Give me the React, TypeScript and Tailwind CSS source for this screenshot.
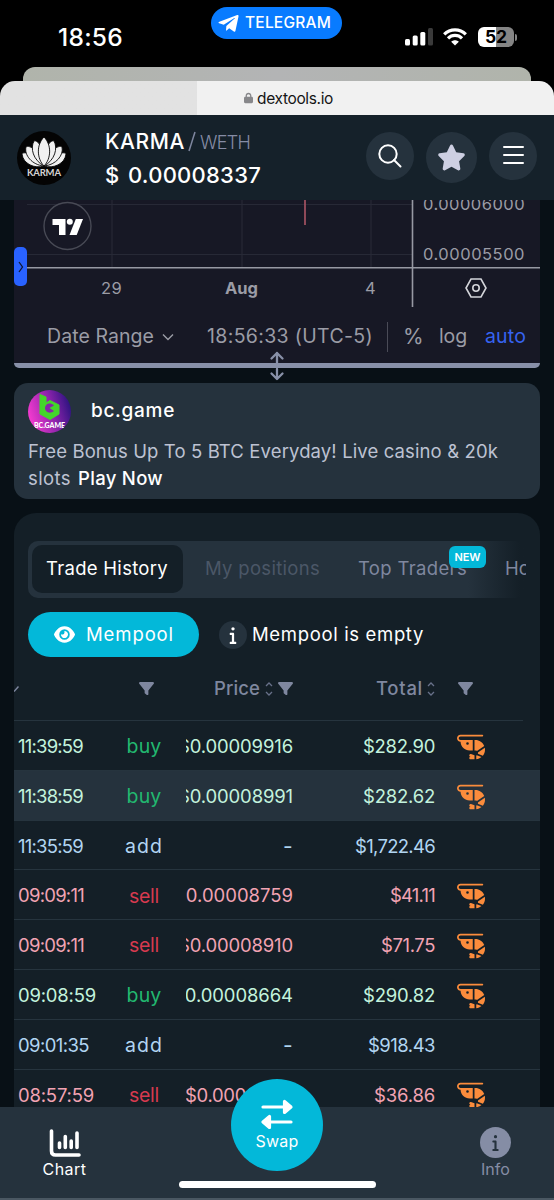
import { useLayoutEffect, useRef, useState } from "react";
import type { ReactNode } from "react";
import { FaEye, FaFilter, FaInfo, FaLock, FaShrimp, FaStar } from "react-icons/fa6";
import { FaTelegramPlane } from "react-icons/fa";

// Spreads a label over a fixed width by adjusting its letter spacing.
function Fit({ w, className = "", children }: { w: number; className?: string; children: string }) {
  const ref = useRef<HTMLSpanElement>(null);
  const [spacing, setSpacing] = useState(0);

  useLayoutEffect(() => {
    if (!ref.current) return;
    const natural = ref.current.getBoundingClientRect().width;
    setSpacing((s) => s + (w - natural) / children.length);
  }, [w, children]);

  return (
    <span
      ref={ref}
      style={{ letterSpacing: `${spacing}px` }}
      className={`inline-block shrink-0 whitespace-pre ${className}`}
    >
      {children}
    </span>
  );
}

type Kind = "buy" | "sell" | "add";
type Trade = {
  time: string;
  timeW: number;
  kind: Kind;
  price: string;
  priceW: number;
  total: string;
  totalW: number;
};

const trades: Trade[] = [
  { time: "11:39:59", timeW: 65, kind: "buy", price: "$0.00009916", priceW: 115, total: "$282.90", totalW: 72 },
  { time: "11:38:59", timeW: 65, kind: "buy", price: "$0.00008991", priceW: 115, total: "$282.62", totalW: 72 },
  { time: "11:35:59", timeW: 65, kind: "add", price: "-", priceW: 10, total: "$1,722.46", totalW: 80 },
  { time: "09:09:11", timeW: 66, kind: "sell", price: "$0.00008759", priceW: 119, total: "$41.11", totalW: 45 },
  { time: "09:09:11", timeW: 66, kind: "sell", price: "$0.00008910", priceW: 115, total: "$71.75", totalW: 54 },
  { time: "09:08:59", timeW: 78, kind: "buy", price: "$0.00008664", priceW: 120, total: "$290.82", totalW: 72 },
  { time: "09:01:35", timeW: 71, kind: "add", price: "-", priceW: 10, total: "$918.43", totalW: 67 },
  { time: "08:57:59", timeW: 76, kind: "sell", price: "$0.00008117", priceW: 108, total: "$36.86", totalW: 61 },
];

const rowColor: Record<Kind, string> = {
  buy: "text-[#c3f3dd]",
  sell: "text-[#f2a3b3]",
  add: "text-[#b1d5f2]",
};

const kindColor: Record<Kind, string> = {
  buy: "text-[#22b870]",
  sell: "text-[#d63a4f]",
  add: "text-[#b1d5f2]",
};

const kindWidth: Record<Kind, number> = { buy: 35, sell: 30, add: 38 };

function StatusBar() {
  return (
    <div className="relative flex h-[67px] items-start justify-between">
      <Fit w={65} className="ml-[58px] mt-[19px] text-[24.5px] leading-9 font-medium text-white">18:56</Fit>
      <div className="absolute left-[211px] top-[7px] flex h-8 w-[131px] items-center rounded-full bg-[#087bff] pl-1.5 text-white">
        <FaTelegramPlane className="size-[23px]" />
        <Fit w={86} className="ml-[5px] text-[15.5px] font-medium">TELEGRAM</Fit>
      </div>
      <div className="mr-[37px] mt-[27px] flex items-center">
        <svg width="28" height="20" viewBox="0 0 28 20" fill="#fff">
          <rect x="0" y="12" width="5" height="6.5" rx="1.5" />
          <rect x="7.7" y="8.5" width="5" height="10" rx="1.5" />
          <rect x="15.3" y="5" width="5" height="13.5" rx="1.5" />
          <rect x="23" y="1" width="5" height="17.5" rx="1.5" fill="#3a3a3a" />
        </svg>
        <svg className="ml-[10px]" width="24" height="20" viewBox="0 0 24 20" fill="none" stroke="#fff" strokeWidth="3.2">
          <path d="M1.2 7.4C7.2 1.3 16.8 1.3 22.8 7.4" />
          <path d="M5 11.3C8.9 7.4 15.1 7.4 19 11.3" />
          <path d="M12 18.6 8.2 14.8C10.3 12.8 13.7 12.8 15.8 14.8Z" fill="#fff" stroke="none" />
        </svg>
        <div className="ml-[11px] flex h-[20px] w-[36px] items-center justify-center rounded-[6px] bg-linear-to-r from-white from-51% to-[#858585] to-51% text-[17.5px] font-bold text-black">
          52
        </div>
        <div className="ml-px h-[7px] w-[2px] rounded-r-full bg-[#858585]" />
      </div>
    </div>
  );
}

function BrowserSheet() {
  return (
    <>
      <div className="mx-[23px] h-[14px] rounded-t-[12px] bg-linear-to-r from-[#b0b4ab] via-[#b3b4b5] to-[#b0b4ab]" />
      <div className="flex h-[34px] items-center rounded-t-[15px] bg-linear-to-r from-[#e2e2e2] from-[197px] to-[#f1f1f1] to-[197px] pl-[244px] text-[#151515]">
        <FaLock className="h-[12px] w-[9px] text-[#87878a]" />
        <Fit w={76} className="mt-px ml-[4px] text-[15.5px]">dextools.io</Fit>
      </div>
    </>
  );
}

function KarmaLogo() {
  return (
    <svg width="54" height="54" viewBox="0 0 54 54" className="shrink-0">
      <circle cx="27" cy="27" r="27" fill="#040404" />
      <g fill="#f1f1f1" stroke="#040404" strokeWidth="0.9">
        <path d="M27 35C18 38 6 33 5 23C5 20 22 22 27 35Z" />
        <path d="M27 35C36 38 48 33 49 23C49 20 32 22 27 35Z" />
        <path d="M27 35C15 34 7 24 9 16C11 13 27 21 27 35Z" />
        <path d="M27 35C39 34 47 24 45 16C43 13 27 21 27 35Z" />
        <path d="M27 35C16 29 13 17 17 10C20 8 31 20 27 35Z" />
        <path d="M27 35C38 29 41 17 37 10C34 8 23 20 27 35Z" />
        <path d="M27 35C20 28 19 14 27 6C35 14 34 28 27 35Z" />
      </g>
      <text x="27" y="45" textAnchor="middle" textLength="34" fontSize="9.5" fontFamily="Lato, sans-serif" fontWeight="700" fill="#d4d4d4">
        KARMA
      </text>
    </svg>
  );
}

function Header() {
  return (
    <header className="flex h-[85px] items-start bg-[#15212a] pl-[17px]">
      <div className="mt-[16px]"><KarmaLogo /></div>
      <div className="ml-[34px] mt-[12px] w-[262px]">
        <div className="flex h-[30px] items-center">
          <Fit w={80} className="text-[21px] font-medium text-white">KARMA</Fit>
          <svg className="ml-[3px]" width="8" height="22" stroke="#7f879f" strokeWidth="1.5">
            <path d="M7 1 1 20" />
          </svg>
          <Fit w={50} className="ml-[4px] text-[18px] font-light text-[#858ca5]">WETH</Fit>
        </div>
        <div className="mt-[2px] flex h-[32px] items-center text-[22px] font-medium text-white">
          <Fit w={14}>$</Fit>
          <Fit w={133} className="ml-[9px]">0.00008337</Fit>
        </div>
      </div>
      <div className="mt-[17px] flex items-start">
        <div className="-ml-px flex size-[48px] items-center justify-center rounded-full bg-[#25323d]">
          <svg width="24" height="24" fill="none" stroke="#fff" strokeWidth="2">
            <circle cx="10" cy="10" r="8.7" />
            <path d="m16 16 6.5 6.5" strokeLinecap="round" />
          </svg>
        </div>
        <div className="ml-[12px] flex size-[51px] items-center justify-center rounded-full bg-[#25323d]">
          <FaStar className="size-[29px] text-[#cdcfe2]" />
        </div>
        <div className="ml-[12px] flex size-[48px] flex-col items-center justify-center gap-[5.7px] rounded-full bg-[#25323d] pb-[2px]">
          <div className="h-[2px] w-[21px] rounded bg-white" />
          <div className="h-[2px] w-[21px] rounded bg-white" />
          <div className="h-[2px] w-[21px] rounded bg-white" />
        </div>
      </div>
    </header>
  );
}

function ChartPanel() {
  return (
    <section className="relative mx-[14px] h-[168px] rounded-b-[5px] border-b-[5.5px] border-[#8890a8] bg-[#171825]">
      <svg className="absolute left-0 top-0" width="526" height="108" fill="none">
        <g stroke="#272936" strokeWidth="1.2">
          <path d="M13 4.5H398M13 54.5H398M98 0V68M228 0V68M357 0V68" />
        </g>
        <path d="M291 0V25" stroke="#9c4f5f" strokeWidth="1.8" />
        <path d="M12 67.7H526M398.5 0V107" stroke="#9799a3" strokeWidth="1.6" />
        <circle cx="53.500" cy="26" r="23.500" fill="#171825" stroke="#484a55" strokeWidth="1.4" />
        <g fill="#fff">
          <path d="M38.500 19H51.500V35H45V25H38.500Z" />
          <circle cx="55.800" cy="21.800" r="3" />
          <path d="M61.800 19H69L62.700 35H55.500Z" />
        </g>
      </svg>
      <div className="absolute left-0 top-[47px] flex h-[39px] w-[13px] items-center justify-center rounded-[5px] bg-[#2962ff]">
        <svg width="6" height="12" fill="none" stroke="#101832" strokeWidth="1.3"><path d="M1 1 4.500 6 1 11" /></svg>
      </div>
      <div className="relative flex h-[67px] flex-col items-end justify-between overflow-hidden pr-[15px] pb-px text-[16.5px] leading-[24px] text-[#9b9ca6]">
        <Fit w={102} className="-mt-[8px]">0.00006000</Fit>
        <Fit w={102}>0.00005500</Fit>
      </div>
      <div className="relative flex h-[42px] items-center text-[16.5px] text-[#9b9ca6]">
        <Fit w={21} className="ml-[87px]">29</Fit>
        <Fit w={33} className="ml-[103px] font-bold">Aug</Fit>
        <Fit w={11} className="ml-[107px]">4</Fit>
        <svg className="ml-[89px]" width="22" height="20" fill="none" stroke="#d4d5da" strokeWidth="1.6">
          <path d="M6 1H16L21 10 16 19H6L1 10Z" />
          <circle cx="11" cy="10" r="3.200" />
        </svg>
      </div>
      <div className="relative flex h-[53px] items-center pt-[3px] text-[19.5px] text-[#9b9ca6]">
        <Fit w={107} className="ml-[33px]">Date Range</Fit>
        <svg className="ml-[8px]" width="12" height="8" fill="none" stroke="#9b9ca6" strokeWidth="1.4"><path d="M1 1.500 6 6.500 11 1.500" /></svg>
        <Fit w={166} className="ml-[33px]">18:56:33 (UTC-5)</Fit>
        <div className="ml-[14px] h-[30px] w-px bg-[#4a4b57]" />
        <Fit w={19} className="ml-[15px] text-[21px]">%</Fit>
        <Fit w={28} className="ml-[17px]">log</Fit>
        <Fit w={41} className="ml-[18px] text-[#3663f0]">auto</Fit>
      </div>
      <svg className="absolute left-[255px] top-[151px]" width="16" height="30" fill="none" stroke="#8890a8" strokeWidth="2.300" strokeLinecap="round" strokeLinejoin="round">
        <path d="M8 2V12M2.500 7.500 8 2 13.500 7.500M8 18V28M2.500 22.500 8 28 13.500 22.500" />
      </svg>
    </section>
  );
}

function BcLogo() {
  return (
    <svg width="43" height="43" viewBox="0 0 43 43">
      <defs>
        <linearGradient id="bc" x1="0" y1="0.6" x2="1" y2="0.3">
          <stop offset="0" stopColor="#f63bd0" />
          <stop offset="0.55" stopColor="#8d24ac" />
          <stop offset="1" stopColor="#28127e" />
        </linearGradient>
        <clipPath id="bcClip"><circle cx="21.500" cy="21.500" r="21.500" /></clipPath>
      </defs>
      <g clipPath="url(#bcClip)">
        <rect width="43" height="43" fill="url(#bc)" />
        <path d="M12 4.500 18 7V13L22 10.500 31 15V24L22 29.500 12 24Z" fill="#43d62a" stroke="#43d62a" strokeLinejoin="round" />
        <path d="M26 15.500 21.500 18 26 21C22 24.500 17 22 17 18C17 14 22 11.500 26 15.500Z" fill="#8526a8" />
        <text x="21.500" y="38" textAnchor="middle" textLength="31" fontSize="7" fontFamily="Lato, sans-serif" fontWeight="900" fill="#fff">
          BC.GAME
        </text>
      </g>
    </svg>
  );
}

function AdCard() {
  return (
    <section className="mx-[14px] mt-[15px] h-[116px] rounded-[14px] bg-[#25323d] pl-[14px] pt-[6px] text-[18.5px] text-[#bdc2d2]">
      <div className="flex h-[44px] items-center">
        <BcLogo />
        <Fit w={84} className="ml-[20px] text-[19px] font-medium text-white">bc.game</Fit>
      </div>
      <div className="mt-[5px] h-[27px] leading-[27px]">
        <Fit w={470}>Free Bonus Up To 5 BTC Everyday! Live casino & 20k</Fit>
      </div>
      <div className="flex h-[27px] leading-[27px]">
        <Fit w={43}>slots</Fit>
        <Fit w={85} className="ml-[7px] font-medium text-white">Play Now</Fit>
      </div>
    </section>
  );
}

function Tabs() {
  return (
    <div className="relative flex h-[57px] w-[498px] items-center overflow-hidden rounded-[10px] bg-linear-to-r from-[#25323d] from-[440px] to-[#141f27] to-[492px] pb-[2px] text-[18.5px] text-[#7f879f]">
      <div className="ml-[4px] flex h-[48px] w-[151px] shrink-0 items-center rounded-[10px] bg-[#141f27] pl-[14px] text-white">
        <Fit w={122}>Trade History</Fit>
      </div>
      <Fit w={115} className="ml-[22px] text-[#4b5767]">My positions</Fit>
      <Fit w={109} className="ml-[38px]">Top Traders</Fit>
      <Fit w={68} className="ml-[38px]">Holders</Fit>
      <div className="absolute left-[421px] top-[5px] flex h-[22px] w-[37px] items-center justify-center rounded-[6px] bg-[#03b8d9] text-white">
        <Fit w={26} className="text-[11px] font-semibold">NEW</Fit>
      </div>
    </div>
  );
}

function SortArrows() {
  return (
    <svg width="8" height="14" fill="none" stroke="#68718a" strokeWidth="1.3" className="shrink-0">
      <path d="M1 4 4 1 7 4M1 10 4 13 7 10" />
    </svg>
  );
}

function Cell({ className, children }: { className: string; children?: ReactNode }) {
  return <div className={`flex shrink-0 items-center ${className}`}>{children}</div>;
}

function TradeTable() {
  return (
    <div>
      <div className="mr-[17px] flex h-[64px] items-center overflow-hidden border-b border-[#26343e] text-[18.5px] font-medium text-[#7f879f]">
        <Cell className="w-[91px]">
          <svg width="5" height="8" fill="none" stroke="#7f879f" strokeWidth="1.500"><path d="M0 6.500 4.500 1.500" /></svg>
        </Cell>
        <Cell className="w-[82px] justify-center"><FaFilter className="size-[15px]" /></Cell>
        <Cell className="w-[107px] pl-[27px]">
          <Fit w={46}>Price</Fit>
          <span className="ml-[5px]"><SortArrows /></span>
          <FaFilter className="ml-[5px] size-[15px] shrink-0" />
        </Cell>
        <Cell className="ml-[12px] w-[129px] justify-end">
          <Fit w={47}>Total</Fit>
          <span className="ml-[4px]"><SortArrows /></span>
        </Cell>
        <Cell className="ml-[23px]"><FaFilter className="size-[15px]" /></Cell>
      </div>
      {trades.map((t, i) => (
        <div
          key={i}
          className={`flex h-[49.8px] items-center border-b border-[#26343e] pt-[3px] text-[18.5px] ${rowColor[t.kind]} ${i === 1 ? "bg-[#25323d]" : ""}`}
        >
          <Cell className="w-[91px] pl-[4px]"><Fit w={t.timeW}>{t.time}</Fit></Cell>
          <Cell className={`w-[78px] justify-center text-[19.5px] ${kindColor[t.kind]}`}>
            <Fit w={kindWidth[t.kind]}>{t.kind}</Fit>
          </Cell>
          <Cell className={`ml-[3px] w-[107px] justify-end overflow-hidden ${t.price === "-" ? "text-[21px]" : ""}`}>
            <Fit w={t.priceW}>{t.price}</Fit>
          </Cell>
          <Cell className="w-[142px] justify-end"><Fit w={t.totalW}>{t.total}</Fit></Cell>
          {t.kind !== "add" && <FaShrimp className="ml-[22px] size-[28px] shrink-0 text-[#fb8c3c]" />}
        </div>
      ))}
    </div>
  );
}

function TradesPanel() {
  return (
    <section className="mx-[14px] mt-[14px] h-[594px] overflow-hidden rounded-t-[22px] bg-[#141f27] pt-[28px]">
      <div className="pl-[14px]">
        <Tabs />
        <div className="mt-[14px] flex h-[45px] items-center text-[18.5px] text-white">
          <div className="flex h-[45px] w-[171px] items-center rounded-full bg-[#03b8d9] pl-[26px]">
            <FaEye className="size-[21px]" />
            <Fit w={88} className="ml-[11px]">Mempool</Fit>
          </div>
          <div className="ml-[20px] flex size-[28px] items-center justify-center rounded-full bg-[#25323d]">
            <FaInfo className="h-[18px] w-[12px]" />
          </div>
          <Fit w={172} className="ml-[5px]">Mempool is empty</Fit>
        </div>
      </div>
      <TradeTable />
    </section>
  );
}

function BottomNav() {
  return (
    <nav className="relative flex h-[93px] justify-between border-b-2 border-[#4a5762] bg-[#25323d] text-[16px]">
      <div className="flex w-[129px] flex-col items-center pt-[22px] text-white">
        <svg width="32" height="28" fill="none" stroke="#fff" strokeLinecap="round" strokeLinejoin="round">
          <path d="M2.500 2V22Q2.500 26 6.500 26H30" strokeWidth="3.600" />
          <path d="M10.500 14V18.500M16.300 7.500V18.500M22.200 12V18.500M28 4V18.500" strokeWidth="3.600" />
        </svg>
        <Fit w={44} className="leading-[24px]">Chart</Fit>
      </div>
      <div className="absolute left-[231px] top-[-28px] flex size-[92px] flex-col items-center rounded-full bg-[#03b8d9] pt-[20px] text-white">
        <svg width="34" height="30" fill="none" stroke="#fff" strokeWidth="3.200" strokeLinecap="round" strokeLinejoin="round">
          <path d="M3 8H24M31 23H10" />
          <path d="M24.500 2.500V13.500L31 8Z" fill="#fff" />
          <path d="M9.500 17.500V28.500L3 23Z" fill="#fff" />
        </svg>
        <Fit w={43} className="leading-[24px]">Swap</Fit>
      </div>
      <div className="flex w-[117px] flex-col items-center pt-[20px] text-[#858da5]">
        <div className="flex size-[31px] items-center justify-center rounded-full bg-[#858da5] text-[#25323d]">
          <FaInfo className="h-[17px] w-[11px]" />
        </div>
        <Fit w={29} className="-mt-px leading-[24px]">Info</Fit>
      </div>
      <div className="absolute left-[179px] top-[74px] h-[7px] w-[197px] rounded-full bg-white" />
    </nav>
  );
}

export default function App() {
  return (
    <div className="flex h-[1200px] w-[554px] flex-col overflow-hidden bg-black font-['Inter','Liberation_Sans',sans-serif]">
      <StatusBar />
      <BrowserSheet />
      <div className="flex-1 bg-[#081016]">
        <Header />
        <ChartPanel />
        <AdCard />
        <TradesPanel />
        <BottomNav />
      </div>
    </div>
  );
}
